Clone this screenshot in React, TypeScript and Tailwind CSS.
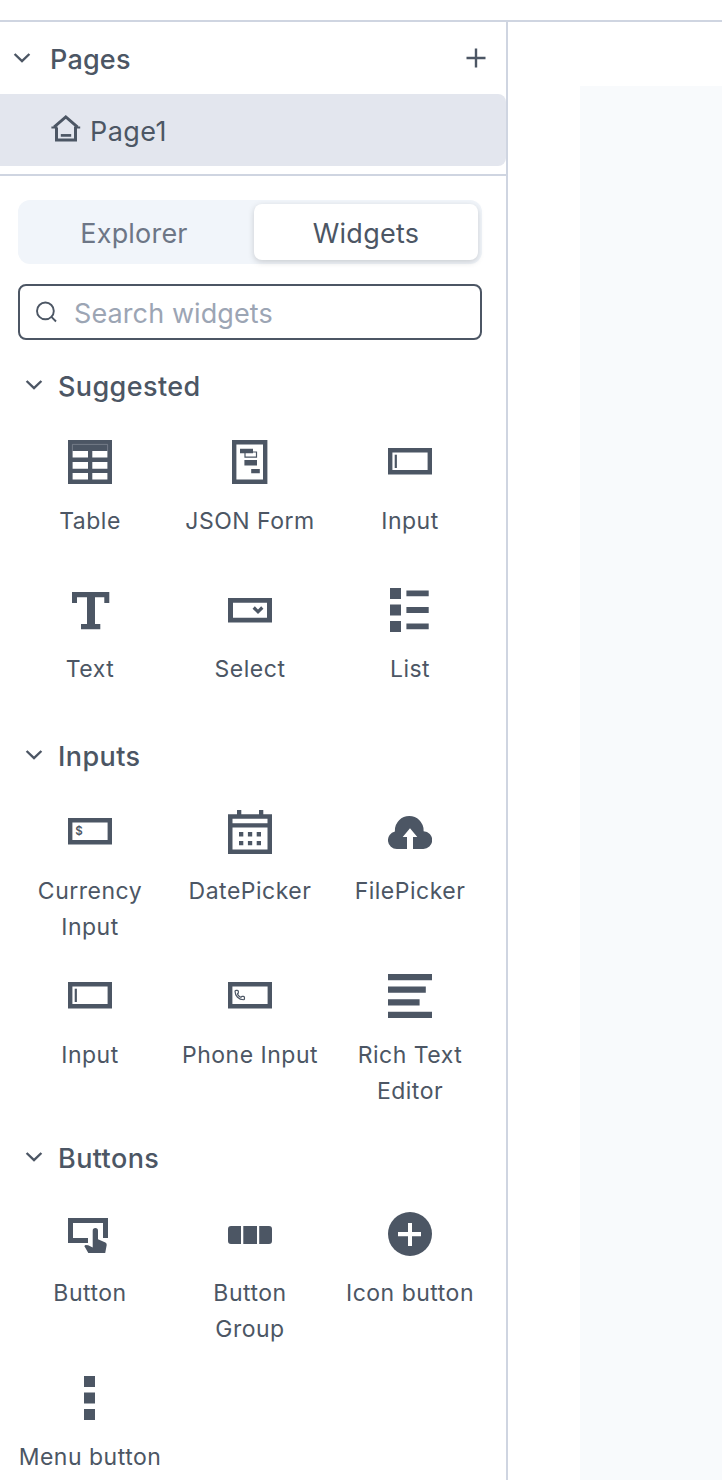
import React from "react";

const INK = "#4c5664";

function Chevron() {
  return (
    <svg width="20" height="20" viewBox="0 0 20 20" fill="none" className="shrink-0">
      <path d="M2.6 6 L10 13.2 L17.4 6" stroke={INK} strokeWidth="2.4" />
    </svg>
  );
}

function Glyph({ children }: { children: React.ReactNode }) {
  return (
    <svg width="44" height="44" viewBox="0 0 44 44" fill={INK} className="shrink-0">
      {children}
    </svg>
  );
}

const Box = () => (
  <path fillRule="evenodd" d="M0 8H44V34.5H0Z M4.4 12.4V30.1H39.6V12.4Z" />
);

const TableIcon = () => (
  <Glyph>
    <path
      fillRule="evenodd"
      d="M0 0H44V44H0Z M4.6 11V17.6H20V11Z M24.3 11V17.6H39.4V11Z M4.6 22V28.7H20V22Z M24.3 22V28.7H39.4V22Z M4.6 33V39.6H20V33Z M24.3 33V39.6H39.4V33Z"
    />
    <path d="M4.4 11V4.4H39.6V11" fill="none" stroke="#858c98" strokeWidth="0.7" />
  </Glyph>
);

const JsonIcon = () => (
  <Glyph>
    <path fillRule="evenodd" d="M4 0H39.4V44H4Z M8.4 4.4V39.6H35V4.4Z" />
    <path d="M12 8.8H25V13.2H12Z M16.4 20H29V25.4H16.4Z M23.2 29H31.8V33.3H23.2Z" />
    <path d="M17 12H28.5V17.2H17Z" fill="none" stroke={INK} strokeWidth="1.2" />
  </Glyph>
);

const InputIcon = () => (
  <Glyph>
    <Box />
    <path d="M6.7 14.7H8.9V28H6.7Z" />
  </Glyph>
);

const TextIcon = () => (
  <Glyph>
    <path d="M4 4H41.3V15H36.3V9.2H27V36H32.3V41.3H13V36H19V9.2H9V15H4Z" />
  </Glyph>
);

const SelectIcon = () => (
  <Glyph>
    <path fillRule="evenodd" d="M0 10H44V34.6H0Z M5 14.8V29.7H39V14.8Z" />
    <path d="M25.7 19.5L30 23.8L34.3 19.5" fill="none" stroke={INK} strokeWidth="3.2" />
  </Glyph>
);

const ListIcon = () => (
  <Glyph>
    <path d="M2 0H13V11H2Z M2 16.5H13V27.5H2Z M2 33H13V44H2Z" />
    <path d="M18.4 2.6H40.7V8.3H18.4Z M18.4 19.1H40.7V24.9H18.4Z M18.4 35.6H40.7V41.3H18.4Z" />
  </Glyph>
);

const CurrencyIcon = () => (
  <Glyph>
    <Box />
    <text x="11" y="25.3" textAnchor="middle" fontSize="11.5" fontWeight="600" fontFamily="Inter, sans-serif">
      $
    </text>
  </Glyph>
);

const DateIcon = () => (
  <Glyph>
    <path
      fillRule="evenodd"
      d="M0 4.2H44V44H0Z M4.5 8.7V13.2H39.5V8.7Z M4.5 17.4V39.6H39.5V17.4Z"
    />
    <path d="M9 0H13.3V5H9Z M31 0H35.3V5H31Z" />
    <path d="M11 22H15.3V26.4H11Z M19.9 22H24.2V26.4H19.9Z M28.7 22H33V26.4H28.7Z M11 31H15.3V35.2H11Z M19.9 31H24.2V35.2H19.9Z M28.7 31H33V35.2H28.7Z" />
  </Glyph>
);

const FileIcon = () => (
  <Glyph>
    <path
      fillRule="evenodd"
      d="M8.8 39A8.8 8.8 0 0 1 6.9 21.6V20.4A14.35 14.35 0 0 1 35.6 20.4V21.2A8.9 8.9 0 0 1 35 39H25V27H29.3L22 18.3L14.7 27H19V39Z"
    />
  </Glyph>
);

const PhoneIcon = () => (
  <Glyph>
    <Box />
    <g transform="translate(6.1 15.4) scale(0.47)">
      <path
        d="M13.832 16.568a1 1 0 0 0 1.213-.303l.355-.465A2 2 0 0 1 17 15h3a2 2 0 0 1 2 2v3a2 2 0 0 1-2 2A18 18 0 0 1 2 4a2 2 0 0 1 2-2h3a2 2 0 0 1 2 2v3a2 2 0 0 1-.8 1.6l-.468.351a1 1 0 0 0-.292 1.233 14 14 0 0 0 6.392 6.384"
        fill="none"
        stroke={INK}
        strokeWidth="2.6"
      />
    </g>
  </Glyph>
);

const RichTextIcon = () => (
  <Glyph>
    <path d="M0 0H44V6.3H0Z M0 12.5H37.8V18.8H0Z M0 25.2H31.6V31.4H0Z M0 37.7H44V44H0Z" />
  </Glyph>
);

const ButtonIcon = () => (
  <Glyph>
    <path d="M0 6H40V26H35V11H5V26H20V31H0Z" />
    <path d="M24.7 18.7A2.65 2.65 0 0 1 30 18.7V27.3L37.4 30.6Q38.9 31.4 38.7 33L37.2 41H20.3L16.3 34L17.5 33L20.2 33.2L24.7 35.5Z" />
  </Glyph>
);

const ButtonGroupIcon = () => (
  <Glyph>
    <path d="M3 14H13V32H3A3 3 0 0 1 0 29V17A3 3 0 0 1 3 14Z M15.3 14H29V32H15.3Z M31.2 14H41A3 3 0 0 1 44 17V29A3 3 0 0 1 41 32H31.2Z" />
  </Glyph>
);

const IconButtonIcon = () => (
  <Glyph>
    <circle cx="22" cy="22" r="22" />
    <path d="M20 11H24V20H33V24.2H24V34H20V24.2H10V20H20Z" fill="#fff" />
  </Glyph>
);

const MenuIcon = () => (
  <Glyph>
    <path d="M16 0H27V11H16Z M16 16.5H27V27.5H16Z M16 33H27V44H16Z" />
  </Glyph>
);

type Item = { label: string; icon: () => React.ReactElement };

const suggested: Item[] = [
  { label: "Table", icon: TableIcon },
  { label: "JSON Form", icon: JsonIcon },
  { label: "Input", icon: InputIcon },
  { label: "Text", icon: TextIcon },
  { label: "Select", icon: SelectIcon },
  { label: "List", icon: ListIcon },
];

const inputs: Item[] = [
  { label: "Currency\nInput", icon: CurrencyIcon },
  { label: "DatePicker", icon: DateIcon },
  { label: "FilePicker", icon: FileIcon },
  { label: "Input", icon: InputIcon },
  { label: "Phone Input", icon: PhoneIcon },
  { label: "Rich Text\nEditor", icon: RichTextIcon },
];

const buttons: Item[] = [
  { label: "Button", icon: ButtonIcon },
  { label: "Button\nGroup", icon: ButtonGroupIcon },
  { label: "Icon button", icon: IconButtonIcon },
  { label: "Menu button", icon: MenuIcon },
];

function Section({ title, items, rows }: { title: string; items: Item[]; rows: string }) {
  return (
    <section>
      <div className="flex h-10 items-start pl-6">
        <div className="mt-[9px]">
          <Chevron />
        </div>
        <h2 className="mt-px ml-3.5 text-[27px] leading-10 font-medium tracking-[0.4px]">{title}</h2>
      </div>
      <div className={`mt-[34px] ml-2.5 grid w-[480px] grid-cols-3 ${rows}`}>
        {items.map(({ label, icon: Icon }) => (
          <div key={label} className="flex flex-col items-center">
            <Icon />
            <span className="mt-[19px] text-center text-[23px] leading-9 tracking-[0.5px] whitespace-pre">
              {label}
            </span>
          </div>
        ))}
      </div>
    </section>
  );
}

export default function App() {
  return (
    <div className="flex h-[1480px] w-[722px] flex-col overflow-hidden bg-white font-['Inter',sans-serif] text-[#4c5664]">
      <header className="h-[22px] shrink-0 border-b-2 border-[#cfd5e1]" />
      <div className="flex min-h-0 flex-1">
        <aside className="w-[508px] shrink-0 overflow-hidden border-r-2 border-[#cfd5e1]">
          <div className="flex h-[72px] items-center pr-5 pl-3">
            <Chevron />
            <h2 className="mt-1 ml-[18px] text-[27px] leading-10 font-medium tracking-[0.2px]">Pages</h2>
            <svg width="20" height="20" viewBox="0 0 20 20" className="ml-auto">
              <path d="M0.5 10H19.5M10 0.5V19.5" stroke={INK} strokeWidth="2.4" />
            </svg>
          </div>
          <div className="flex h-[72px] items-center rounded-r-lg bg-[#e3e6ee] pl-[51px]">
            <svg width="30" height="28" viewBox="0 0 30 28" fill="none" stroke={INK} className="-mt-0.5">
              <path d="M5.5 13V25H24.5V13" strokeWidth="3" />
              <path d="M3 12.2L14.8 2L26.6 12.2" strokeWidth="2.9" />
              <path d="M0.4 12.4H6.6M23 12.4H29.2" strokeWidth="2" />
              <path d="M9.8 20.4H20.2" strokeWidth="2.7" />
            </svg>
            <span className="mt-1 ml-[9px] text-[27px] leading-10 tracking-[0.4px]">Page1</span>
          </div>
          <div className="mt-2 h-0.5 bg-[#cfd5e1]" />
          <div className="mt-6 ml-[18px] flex h-16 w-[464px] rounded-xl bg-[#f1f5fa] p-1">
            <div className="flex h-14 flex-1 items-center justify-center pt-1 pr-2 text-[27px] tracking-[0.2px] text-[#6d7686]">
              Explorer
            </div>
            <div className="flex h-14 w-56 items-center justify-center rounded-lg bg-white pt-1 text-[27px] tracking-[0.25px] shadow-[0_2px_6px_rgba(0,0,0,0.17)]">
              Widgets
            </div>
          </div>
          <div className="mt-5 ml-[18px] flex h-14 w-[464px] items-center rounded-lg border-2 border-[#4c5664] pl-4">
            <svg width="22" height="22" viewBox="0 0 22 22" fill="none" stroke={INK} strokeWidth="1.9">
              <circle cx="9.4" cy="9.9" r="8.4" />
              <path d="M15.2 15.7L20 20.5" />
            </svg>
            <span className="mt-1 ml-4 text-[27px] leading-10 tracking-[0.1px] text-[#9ca5b4]">
              Search widgets
            </span>
          </div>
          <div className="mt-[26px]">
            <Section title="Suggested" items={suggested} rows="auto-rows-[148px]" />
            <Section title="Inputs" items={inputs} rows="auto-rows-[164px]" />
            <Section title="Buttons" items={buttons} rows="auto-rows-[164px]" />
          </div>
        </aside>
        <main className="flex flex-1 pt-16 pl-[72px]">
          <div className="flex-1 bg-[#f8fafc]" />
        </main>
      </div>
    </div>
  );
}
